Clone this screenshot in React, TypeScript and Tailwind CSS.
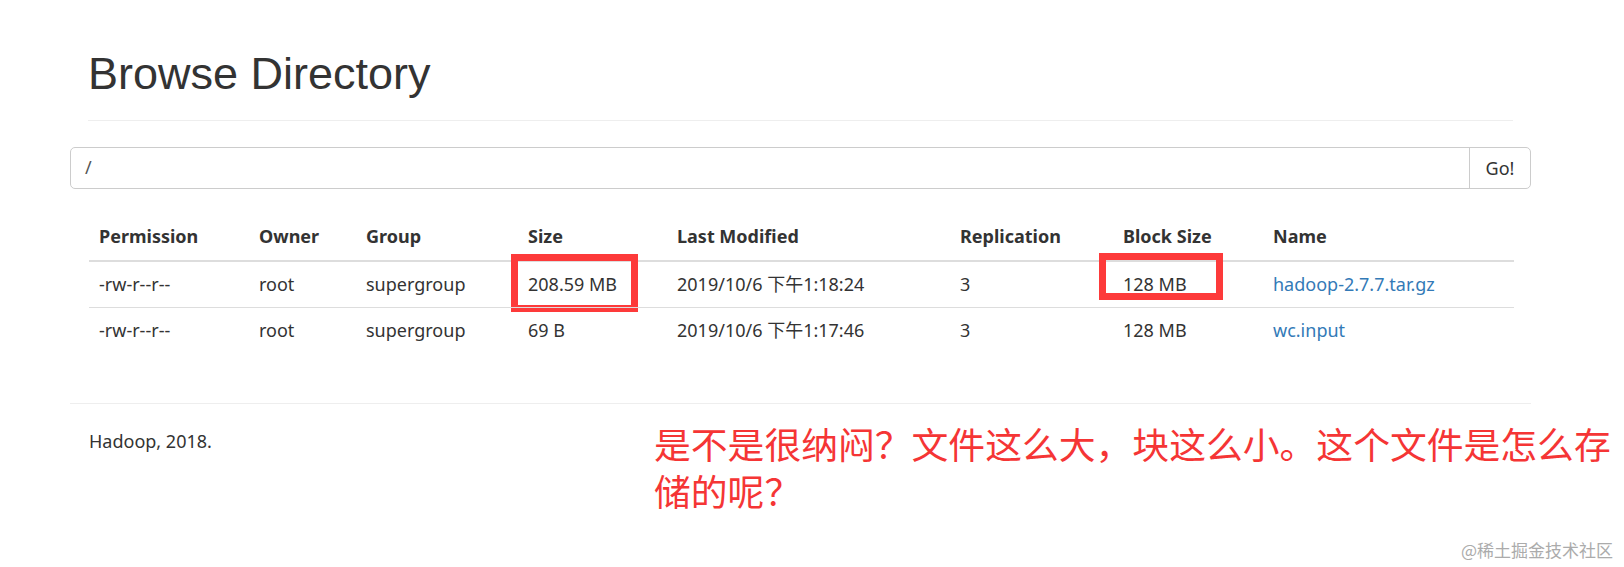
import type { ReactNode } from "react";

type Row = {
  permission: string;
  owner: string;
  group: string;
  size: string;
  modified: string;
  replication: string;
  blockSize: string;
  name: string;
};

const rows: Row[] = [
  {
    permission: "-rw-r--r--",
    owner: "root",
    group: "supergroup",
    size: "208.59 MB",
    modified: "2019/10/6 下午1:18:24",
    replication: "3",
    blockSize: "128 MB",
    name: "hadoop-2.7.7.tar.gz",
  },
  {
    permission: "-rw-r--r--",
    owner: "root",
    group: "supergroup",
    size: "69 B",
    modified: "2019/10/6 下午1:17:46",
    replication: "3",
    blockSize: "128 MB",
    name: "wc.input",
  },
];

const headers = [
  { label: "Permission", w: "w-[160px]" },
  { label: "Owner", w: "w-[107px]" },
  { label: "Group", w: "w-[162px]" },
  { label: "Size", w: "w-[149px]" },
  { label: "Last Modified", w: "w-[283px]" },
  { label: "Replication", w: "w-[163px]" },
  { label: "Block Size", w: "w-[150px]" },
  { label: "Name", w: "w-[251px]" },
];

function Cell({ first, children }: { first: boolean; children: ReactNode }) {
  return (
    <td
      className={`relative px-[10px] py-[9.5px] leading-[26px] align-top ${
        first ? "" : "border-t border-[#ddd]"
      }`}
    >
      {children}
    </td>
  );
}

export default function App() {
  return (
    <div className="relative w-[1624px] h-[567px] overflow-hidden bg-white text-[#333] font-['Noto_Sans','Noto_Sans_CJK_SC',sans-serif]">
      <div className="ml-[70px] w-[1461px]">
        {/* page header */}
        <div className="mx-[18px] pt-[49px] pb-[21px] border-b border-[#eee]">
          <h1 className="text-[45px] leading-[1.1] font-normal text-[#333] font-['Liberation_Sans',Arial,sans-serif]">
            Browse Directory
          </h1>
        </div>

        {/* path bar */}
        <div className="mt-[26px] flex h-[42px] rounded-[5px] border border-[#ccc] text-[18px]">
          <div className="flex flex-1 items-center pl-[14px] text-[#555]">/</div>
          <button className="w-[61px] border-l border-[#ccc] text-[#333] leading-none">
            Go!
          </button>
        </div>

        {/* listing */}
        <table className="mt-[24px] ml-[19px] w-[1425px] table-fixed border-separate border-spacing-0 text-[18px]">
          <colgroup>
            {headers.map((h) => (
              <col key={h.label} className={h.w} />
            ))}
          </colgroup>
          <thead>
            <tr>
              {headers.map((h) => (
                <th
                  key={h.label}
                  className="px-[10px] py-[10px] leading-[27px] text-left font-bold border-b-2 border-[#ddd]"
                >
                  {h.label}
                </th>
              ))}
            </tr>
          </thead>
          <tbody>
            {rows.map((r, i) => (
              <tr key={r.name}>
                <Cell first={i === 0}>{r.permission}</Cell>
                <Cell first={i === 0}>{r.owner}</Cell>
                <Cell first={i === 0}>{r.group}</Cell>
                <Cell first={i === 0}>
                  {r.size}
                  {i === 0 && (
                    <span className="absolute left-[-7px] top-[-8px] w-[127px] h-[58px] border-[7px] border-[#fd3a3a]" />
                  )}
                </Cell>
                <Cell first={i === 0}>{r.modified}</Cell>
                <Cell first={i === 0}>{r.replication}</Cell>
                <Cell first={i === 0}>
                  {r.blockSize}
                  {i === 0 && (
                    <span className="absolute left-[-14px] top-[-9px] w-[124px] h-[47px] border-[7px] border-[#fd3a3a]" />
                  )}
                </Cell>
                <Cell first={i === 0}>
                  <a className="text-[#337ab7]">{r.name}</a>
                </Cell>
              </tr>
            ))}
          </tbody>
        </table>

        {/* footer */}
        <div className="mt-[50px] border-t border-[#eee]" />
        <div className="flex items-start pt-[16px]">
          <p className="ml-[19px] mt-[8px] w-[565px] shrink-0 text-[18px] leading-[26px]">
            Hadoop, 2018.
          </p>
          <p className="w-[962px] shrink-0 text-[36.8px] leading-[47px] text-[#f53535] font-['Noto_Sans_CJK_SC',sans-serif]">
            是不是很纳闷？文件这么大，块这么小。这个文件是怎么存储的呢？
          </p>
        </div>
      </div>

      <span className="absolute right-[11px] bottom-[7px] text-[17px] leading-[20px] text-[#ababab] font-['Noto_Sans_CJK_SC',sans-serif]">
        @稀土掘金技术社区
      </span>
    </div>
  );
}
